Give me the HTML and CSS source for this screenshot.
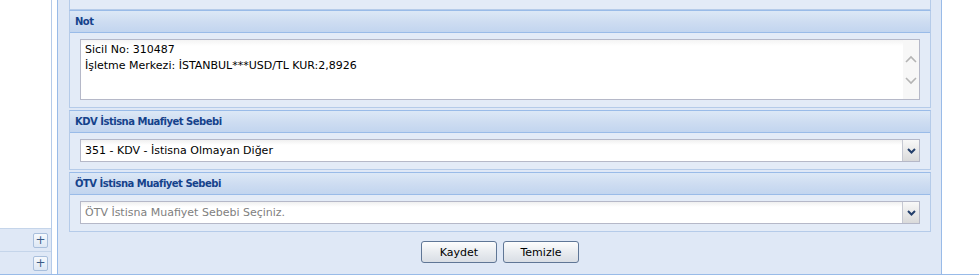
FILE: index.html
```html
<!DOCTYPE html>
<html>
<head>
    <title>Fatura Bilgileri</title>
    <link rel="stylesheet" href="styles.css">
</head>
<body>
    <div class="page">
        <div class="west">
            <div class="west-top"></div>
            <div class="west-row"><span class="tool-plus">+</span></div>
            <div class="west-row"><span class="tool-plus">+</span></div>
        </div>
        <div class="gap"></div>
        <div class="main">
            <div class="fieldset prev"></div>

            <div class="fieldset">
                <div class="fs-header">Not</div>
                <div class="fs-body">
                    <div class="textarea">
                        <div class="textarea-text">Sicil No: 310487<br>İşletme Merkezi: İSTANBUL***USD/TL KUR:2,8926</div>
                        <div class="scroll">
                            <svg width="16" height="60" viewBox="0 0 16 60">
                                <path d="M3 22 L8 17 L13 22" fill="none" stroke="#b4b4b4" stroke-width="1.6"/>
                                <path d="M3 38 L8 43 L13 38" fill="none" stroke="#b4b4b4" stroke-width="1.6"/>
                            </svg>
                        </div>
                    </div>
                </div>
            </div>

            <div class="fieldset">
                <div class="fs-header">KDV İstisna Muafiyet Sebebi</div>
                <div class="fs-body">
                    <div class="combo">
                        <div class="combo-text">351 - KDV - İstisna Olmayan Diğer</div>
                        <div class="combo-trigger">
                            <svg width="9" height="6" viewBox="0 0 9 6"><path d="M1 1 L4.5 4.5 L8 1" fill="none" stroke="#243f6b" stroke-width="2"/></svg>
                        </div>
                    </div>
                </div>
            </div>

            <div class="fieldset">
                <div class="fs-header">ÖTV İstisna Muafiyet Sebebi</div>
                <div class="fs-body">
                    <div class="combo">
                        <div class="combo-text empty">ÖTV İstisna Muafiyet Sebebi Seçiniz.</div>
                        <div class="combo-trigger">
                            <svg width="9" height="6" viewBox="0 0 9 6"><path d="M1 1 L4.5 4.5 L8 1" fill="none" stroke="#243f6b" stroke-width="2"/></svg>
                        </div>
                    </div>
                </div>
            </div>

            <div class="buttons">
                <button class="btn">Kaydet</button>
                <button class="btn">Temizle</button>
            </div>
        </div>
    </div>
</body>
</html>
```

FILE: styles.css
```css
body {
    margin: 0;
    background-color: #fff;
    font-family: "DejaVu Sans", Verdana, sans-serif;
    font-size: 11px;
}

.page {
    display: flex;
    height: 274px;
    border-bottom: 1px solid #99bbe8;
}

/* left accordion */
.west {
    width: 51px;
    border-right: 1px solid #b5cbe9;
    display: flex;
    flex-direction: column;
}

.west-top {
    flex: 1;
    background-color: #fff;
}

.west-row {
    height: 22px;
    border-top: 1px solid #c5d5ea;
    background-color: #dfe8f6;
    display: flex;
    justify-content: flex-end;
    align-items: center;
    padding-right: 3px;
}

.tool-plus {
    width: 13px;
    height: 13px;
    border: 1px solid #a9bfdc;
    border-radius: 2px;
    background: linear-gradient(#f6f9fd, #dde7f4);
    color: #3b5a86;
    font-size: 12px;
    line-height: 12px;
    text-align: center;
}

.gap {
    width: 5px;
}

.main {
    width: 885px;
    border-left: 1px solid #99bbe8;
    border-right: 1px solid #99bbe8;
    background-color: #dfe8f6;
    padding: 0 10px 0 11px;
    box-sizing: border-box;
}

/* fieldsets */
.fieldset {
    border: 1px solid #b5cbe9;
    border-top-color: #99bbe8;
    background-color: #e3ebf7;
    margin-bottom: 2px;
}

.fieldset.prev {
    height: 9px;
    border-top: none;
    margin-bottom: 0;
}

.fs-header {
    height: 21px;
    line-height: 21px;
    padding-left: 5px;
    border-bottom: 1px solid #99bbe8;
    background: linear-gradient(#dce8f6, #cddcf1 55%, #c2d5ef);
    color: #15428b;
    font-weight: bold;
    font-size: 10px;
    letter-spacing: -0.5px;
}

.fs-body {
    padding: 6px 10px 7px 10px;
}

.textarea {
    height: 59px;
    border: 1px solid #b5b8c8;
    background: linear-gradient(#f4f4f4, #fff 6px);
    display: flex;
}

.textarea-text {
    flex: 1;
    padding: 2px 4px;
    line-height: 16px;
    color: #000;
}

.scroll {
    width: 16px;
    background-color: #f7f7f7;
}

.combo {
    height: 21px;
    border: 1px solid #b5b8c8;
    background: linear-gradient(#f0f0f0, #fff 5px);
    display: flex;
}

.combo-text {
    flex: 1;
    padding-left: 4px;
    line-height: 21px;
    color: #000;
}

.combo-text.empty {
    color: #808080;
}

.combo-trigger {
    width: 16px;
    border-left: 1px solid #c5c8d2;
    background: linear-gradient(#f8f8f8, #dadada);
    display: flex;
    justify-content: center;
    align-items: center;
}

/* buttons */
.buttons {
    display: flex;
    justify-content: center;
    gap: 6px;
    padding-top: 7px;
}

.btn {
    width: 76px;
    height: 22px;
    border: 1px solid #5f7696;
    border-radius: 3px;
    background: linear-gradient(#fdfdfd, #e9ecf0 50%, #d9dee5);
    font-family: "DejaVu Sans", Verdana, sans-serif;
    font-size: 11px;
    color: #000;
    padding: 0;
}
```
